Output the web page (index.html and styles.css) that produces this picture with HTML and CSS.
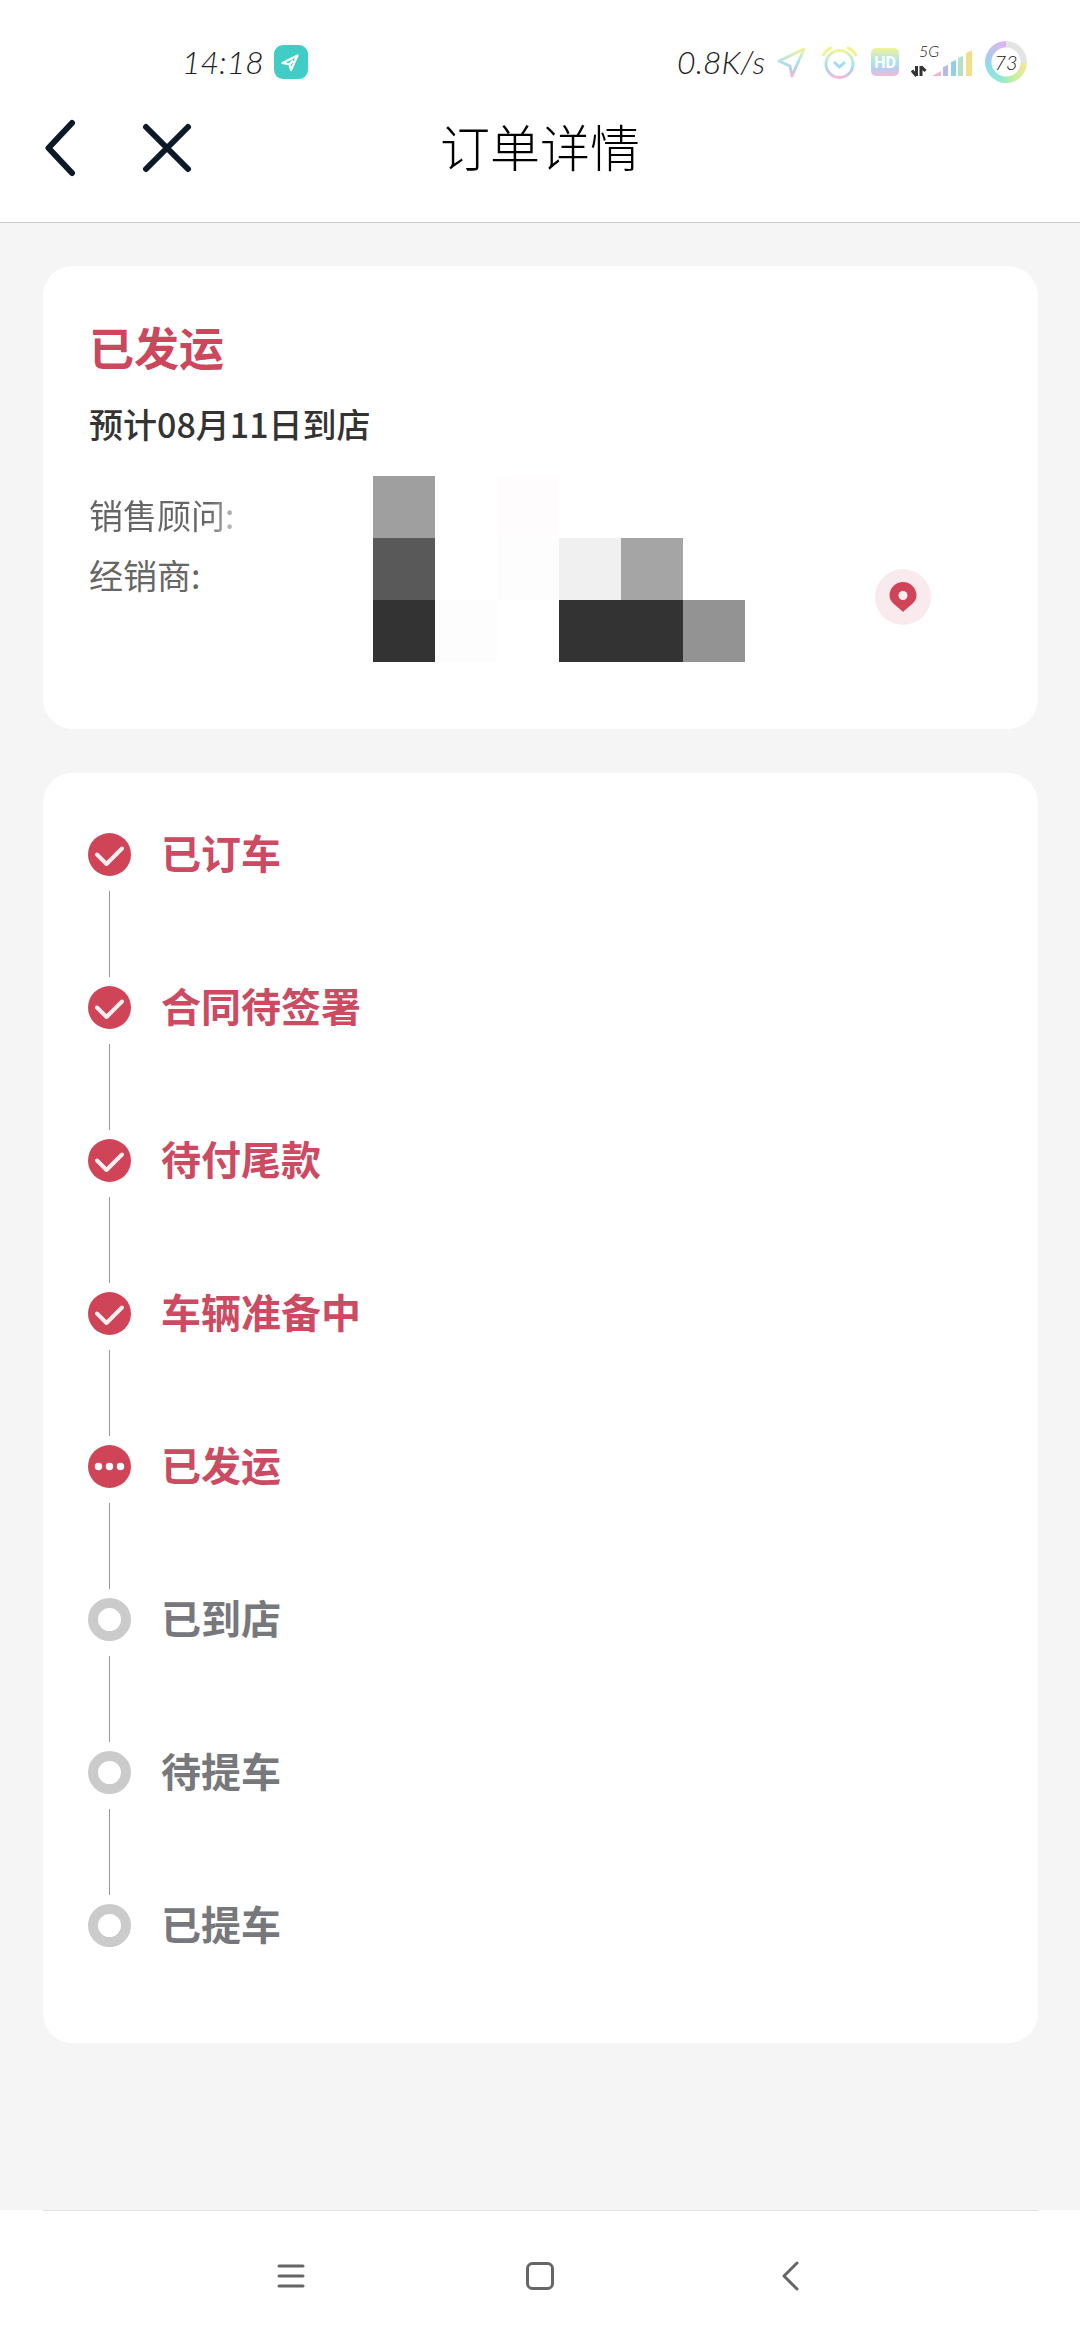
FILE: index.html
```html
<!DOCTYPE html>
<html lang="zh-CN">
<head>
<meta charset="utf-8">
<meta name="viewport" content="width=device-width, initial-scale=1">
<title>订单详情</title>
<link rel="stylesheet" href="styles.css">
</head>
<body>
<svg class="defs" width="0" height="0" aria-hidden="true">
  <defs>
    <linearGradient id="rainbow" x1="0" y1="0" x2="0" y2="1">
      <stop offset="0" stop-color="#f1f39a"/>
      <stop offset="0.5" stop-color="#a9e3ee"/>
      <stop offset="0.75" stop-color="#b9cdee"/>
      <stop offset="1" stop-color="#f3b9d6"/>
    </linearGradient>
    <symbol id="done" viewBox="0 0 43 43">
      <circle cx="21.5" cy="21.5" r="21.5" fill="#d04458"/>
      <path d="M9 21.500l9.500 9.500L34 15.500" fill="none" stroke="#fdeef0" stroke-width="4" stroke-linecap="round" stroke-linejoin="round"/>
    </symbol>
    <symbol id="current" viewBox="0 0 43 43">
      <circle cx="21.5" cy="21.5" r="21.5" fill="#d04458"/>
      <g fill="#fff"><circle cx="10.500" cy="21.500" r="3.700"/><circle cx="21.500" cy="21.500" r="3.700"/><circle cx="32.500" cy="21.500" r="3.700"/></g>
    </symbol>
    <symbol id="todo" viewBox="0 0 43 43">
      <circle cx="21.5" cy="21.5" r="16.5" fill="none" stroke="#cbcbcb" stroke-width="10"/>
    </symbol>
  </defs>
</svg>

<div class="status">
  <span class="status-text">14:18</span>
  <svg class="status-app" width="34" height="34" viewBox="0 0 34 34" aria-hidden="true">
    <rect width="34" height="34" rx="9" fill="#41cdc6"/>
    <path d="M8.500 18L23.500 10.500L17 25L15.500 19.500z M15.500 19.500L19 15.500" fill="none" stroke="#fff" stroke-width="2.200" stroke-linejoin="round"/>
  </svg>
  <div class="status-right">
    <span class="status-text">0.8K/s</span>
    <svg width="32" height="40" viewBox="0 0 32 40" aria-hidden="true">
      <path d="M2 19L27 7L15 34L13 24z" fill="none" stroke="url(#rainbow)" stroke-width="3" stroke-linejoin="round"/>
    </svg>
    <svg width="38" height="40" viewBox="0 0 38 40" aria-hidden="true">
      <circle cx="18.500" cy="22" r="13.500" fill="none" stroke="url(#rainbow)" stroke-width="3"/>
      <path d="M2.500 13Q5 8 10 6M35 13Q32 8 27 6" fill="none" stroke="#f1f39a" stroke-width="3" stroke-linecap="round"/>
      <path d="M13 20l5.500 5L24 20" fill="none" stroke="#a3dcec" stroke-width="3"/>
    </svg>
    <svg width="28" height="40" viewBox="0 0 28 40" aria-hidden="true">
      <rect y="6" width="28" height="28" rx="5" fill="url(#rainbow)"/>
      <text x="14" y="26" class="hd">HD</text>
    </svg>
    <svg width="62" height="40" viewBox="0 0 62 40" aria-hidden="true">
      <text x="8" y="15" class="net">5G</text>
      <path d="M5.500 24v10M1 28.500L5.500 34M10 34V24M10 24.500L14.500 29" fill="none" stroke="#333" stroke-width="3"/>
      <path d="M21 34l9-5v5z" fill="#f2b3d2"/>
      <path d="M32 34v-9l5-2v11z" fill="#b5b9e6"/>
      <path d="M40 34V20l5-2v16z" fill="#94cde6"/>
      <path d="M47 34V16l5-2v20z" fill="#b4dfc8"/>
      <path d="M55 34V11l6-3v26z" fill="#f5de8b"/>
    </svg>
    <div class="battery"><span>73</span></div>
  </div>
</div>

<header class="header">
  <div class="header-actions">
    <button class="icon-button" type="button" aria-label="返回">
      <svg width="32" height="60" viewBox="0 0 32 60"><path d="M27 5L3.500 30L27 55" /></svg>
    </button>
    <button class="icon-button" type="button" aria-label="关闭">
      <svg width="50" height="60" viewBox="0 0 50 60"><path d="M4 9L46 51M46 9L4 51"/></svg>
    </button>
  </div>
  <h1 class="title">订单详情</h1>
</header>

<main class="main">
  <section class="card summary">
    <h2 class="state">已发运</h2>
    <p class="eta">预计08月11日到店</p>
    <div class="info">
      <div class="labels">
        <p class="label fading">销售顾问:</p>
        <p class="label">经销商:</p>
      </div>
      <div class="mosaic" aria-hidden="true">
        <i class="g3"></i><i></i><i class="p1"></i><i></i><i></i><i></i>
        <i class="g2"></i><i></i><i class="p2"></i><i class="g5"></i><i class="g4"></i><i></i>
        <i class="g1"></i><i class="p2"></i><i></i><i class="g1"></i><i class="g1"></i><i class="g6"></i>
      </div>
      <button class="pin" type="button" aria-label="导航到店">
        <svg width="56" height="56" viewBox="0 0 56 56">
          <path d="M28 43C23 37.500 14.500 34 14.500 26.500A13.500 13.500 0 0 1 41.500 26.500C41.500 34 33 37.500 28 43z" fill="#d04458"/>
          <circle cx="28" cy="26.500" r="4.500" fill="#fdeef0"/>
        </svg>
      </button>
    </div>
  </section>

  <section class="card progress">
    <ol class="steps">
      <li class="step active"><svg class="dot"><use href="#done"/></svg><span class="name">已订车</span></li>
      <li class="step active"><svg class="dot"><use href="#done"/></svg><span class="name">合同待签署</span></li>
      <li class="step active"><svg class="dot"><use href="#done"/></svg><span class="name">待付尾款</span></li>
      <li class="step active"><svg class="dot"><use href="#done"/></svg><span class="name">车辆准备中</span></li>
      <li class="step active"><svg class="dot"><use href="#current"/></svg><span class="name">已发运</span></li>
      <li class="step"><svg class="dot"><use href="#todo"/></svg><span class="name">已到店</span></li>
      <li class="step"><svg class="dot"><use href="#todo"/></svg><span class="name">待提车</span></li>
      <li class="step"><svg class="dot"><use href="#todo"/></svg><span class="name">已提车</span></li>
    </ol>
  </section>
</main>

<nav class="navbar">
  <button class="nav-button" type="button" aria-label="最近任务">
    <svg width="30" height="30" viewBox="0 0 30 30"><path d="M3 5h24M3 15h24M3 25h24"/></svg>
  </button>
  <button class="nav-button" type="button" aria-label="主屏幕">
    <svg width="30" height="30" viewBox="0 0 30 30"><rect x="2.500" y="2.500" width="25" height="25" rx="5"/></svg>
  </button>
  <button class="nav-button" type="button" aria-label="返回上一页">
    <svg width="30" height="30" viewBox="0 0 30 30"><path d="M22 2L9 15L22 28"/></svg>
  </button>
</nav>
</body>
</html>
```
FILE: styles.css
```css
* {
  box-sizing: border-box;
  margin: 0;
  padding: 0;
}

body {
  display: flex;
  flex-direction: column;
  min-height: 100vh;
  background: #fff;
  color: #333;
  font-family: "Noto Sans CJK SC", sans-serif;
}

svg {
  display: block;
  flex: none;
}

.defs {
  position: absolute;
}

button {
  border: 0;
  background: none;
  cursor: pointer;
}

/* status bar */
.status {
  display: flex;
  align-items: center;
  height: 100px;
  padding: 24px 53px 0 182px;
}

.status-text {
  font: italic 300 32px/40px Lato, sans-serif;
  color: #222;
}

.status-app {
  margin-left: 10px;
}

.status-right {
  display: flex;
  align-items: center;
  gap: 12px;
  margin-left: auto;
}

.hd {
  font: 700 16px Roboto, sans-serif;
  fill: #fff;
  text-anchor: middle;
}

.net {
  font: italic 300 16px Lato, sans-serif;
  fill: #222;
}

.battery {
  display: grid;
  place-items: center;
  width: 42px;
  height: 42px;
  border-radius: 50%;
  background:
    radial-gradient(circle, #fff 14px, transparent 15px),
    conic-gradient(#e4e4e4 0 25%, #f3e79a 27%, #c9ef9f 42%, #92ead0 55%, #8fdcee 72%, #b9c4f0 84%, #e3b3ee 100%);
}

.battery span {
  font: italic 300 20px/20px Lato, sans-serif;
  color: #222;
}

/* page header */
.header {
  display: grid;
  grid-template-columns: 1fr auto 1fr;
  align-items: center;
  height: 123px;
  padding: 0 45px 26px;
  border-bottom: 1px solid #c8c8c8;
}

.header-actions {
  display: flex;
  gap: 65px;
}

.icon-button path {
  fill: none;
  stroke: #0b1a26;
  stroke-width: 6px;
  stroke-linecap: round;
  stroke-linejoin: round;
}

.title {
  padding-bottom: 6px;
  font-size: 50px;
  font-weight: 300;
  line-height: 60px;
  color: #000;
}

/* content */
.main {
  flex: 1;
  display: flex;
  flex-direction: column;
  gap: 44px;
  padding: 43px 42px 100px 43px;
  background: #f5f5f5;
}

.card {
  border-radius: 30px;
  background: #fff;
}

.summary {
  padding: 51px 107px 67px 46px;
}

.state {
  font-size: 45px;
  font-weight: 700;
  line-height: 60px;
  color: #cc475c;
}

.eta {
  margin-top: 22px;
  font-size: 34px;
  font-weight: 500;
  line-height: 50px;
}

.info {
  display: flex;
  margin-top: 27px;
}

.labels {
  width: 284px;
  padding-top: 9px;
}

.label {
  width: max-content;
  font-size: 34px;
  line-height: 60px;
  color: #666;
}

.fading {
  background: linear-gradient(100deg, #666 80%, #ccc);
  background-clip: text;
  color: transparent;
}

.mosaic {
  display: grid;
  grid-template-columns: repeat(6, 62px);
  grid-auto-rows: 62px;
}

.g1 { background: #333; }
.g2 { background: #595959; }
.g3 { background: #9f9f9f; }
.g4 { background: #a5a5a5; }
.g5 { background: #f0f0f0; }
.g6 { background: #939393; }
.p1 { background: #fffcfd; }
.p2 { background: #fefdfd; }

.pin {
  align-self: flex-end;
  width: 56px;
  height: 56px;
  margin: 0 0 37px auto;
  border-radius: 50%;
  background: #f9eaed;
}

/* order progress */
.progress {
  padding: 60px 45px 96px;
}

.steps {
  list-style: none;
}

.step {
  display: grid;
  grid-template-columns: 43px 1fr;
  grid-template-rows: 43px 86px;
  column-gap: 30px;
  row-gap: 15px;
  padding-bottom: 9px;
  color: #77787c;
}

.step:not(:last-child)::after {
  content: "";
  justify-self: center;
  width: 1px;
  background: #999;
}

.step:last-child {
  grid-template-rows: 43px;
  padding-bottom: 0;
}

.dot {
  width: 43px;
  height: 43px;
}

.name {
  font-size: 40px;
  font-weight: 700;
  line-height: 39px;
}

.active {
  color: #cc4a62;
}

/* system navigation */
.navbar {
  display: grid;
  grid-template-columns: repeat(3, 1fr);
  height: 130px;
  margin: 0 42px 0 43px;
  padding: 0 123px;
  border-top: 1px solid #e2e2e2;
}

.nav-button {
  display: grid;
  place-items: center;
}

.nav-button svg {
  fill: none;
  stroke: #666;
  stroke-width: 3px;
  stroke-linecap: round;
  stroke-linejoin: round;
}
```
